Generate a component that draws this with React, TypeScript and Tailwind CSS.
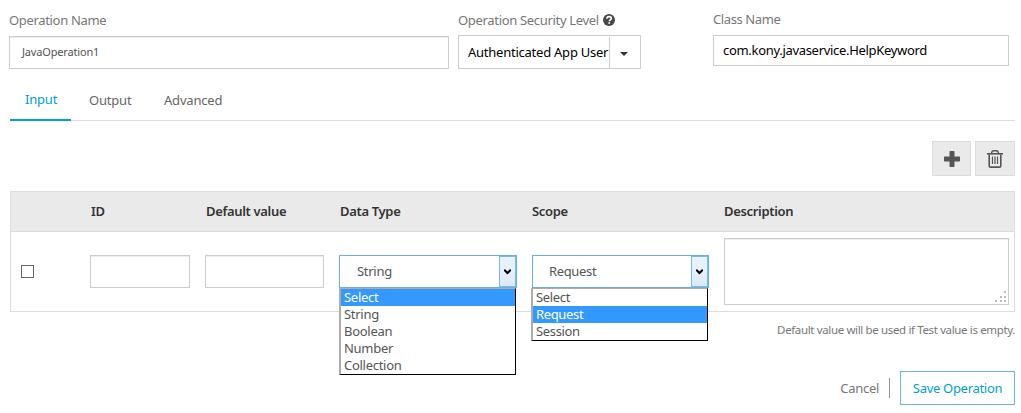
import { ReactNode } from "react";

const inputShadow = "shadow-[inset_0_1px_1px_rgba(0,0,0,0.075)]";

function DropArrow() {
  return (
    <span className="flex w-[17px] items-center justify-center border border-[#7cb8ea] bg-gradient-to-b from-[#ebf4fd] to-[#dbebfb]">
      <svg width="7" height="6" viewBox="0 0 7 6">
        <path d="M.2.8 3.5 4 6.8.8" fill="none" stroke="#000" strokeWidth="2" />
      </svg>
    </span>
  );
}

function OpenSelect({
  value,
  options,
  active,
  box,
  list,
}: {
  value: string;
  options: string[];
  active: string;
  box: string;
  list: string;
}) {
  return (
    <div className={"relative flex h-[33px] border border-[#6aaee6] bg-white " + box}>
      <span className="flex-1 leading-[31px] text-[#555]">{value}</span>
      <DropArrow />
      <ul
        className={
          "absolute top-[32px] z-10 w-[177px] border-t border-r border-b border-l-2 border-t-[#acacac] border-l-[#acacac] border-r-black border-b-black bg-white " +
          list
        }
      >
        {options.map((o) => (
          <li
            key={o}
            className={
              "h-[17px] pl-[3px] leading-[17px] " +
              (o === active ? "bg-[#3399ff] text-white" : "text-[#555]")
            }
          >
            {o}
          </li>
        ))}
      </ul>
    </div>
  );
}

function IconButton({ children, className }: { children: ReactNode; className: string }) {
  return (
    <button
      className={
        "flex h-[35px] items-center justify-center border border-[#ddd] bg-[#eaeaea] " + className
      }
    >
      {children}
    </button>
  );
}

export default function App() {
  return (
    <div className="h-[413px] w-[1021px] overflow-hidden bg-white pl-[9px] font-['Noto_Sans',sans-serif] text-[13px] whitespace-nowrap text-[#777]">
      <div className="flex h-[69px] items-start">
        <div className="w-[449px] pt-[11px]">
          <div className="h-[25px] leading-[18px] tracking-[-0.33px]">Operation Name</div>
          <div className={"h-[33px] w-[440px] border border-[#ccc] pl-3 text-[11px] leading-[30px] tracking-[-0.17px] text-[#555] " + inputShadow}>
            JavaOperation1
          </div>
        </div>
        <div className="w-[255px] pt-[11px]">
          <div className="flex h-6 leading-[18px]">
            <span className="tracking-[-0.32px]">Operation Security Level</span>
            <svg className="mt-[3px] ml-1" width="12" height="12" viewBox="0 0 12 12">
              <circle cx="6" cy="6" r="6" fill="#484848" />
              <path d="M3.9 4.8C3.9 3.3 4.8 2.6 6.1 2.6s2.2.7 2.2 1.8C8.3 5.8 6.3 5.8 6.3 7.3" fill="none" stroke="#fff" strokeWidth="1.6" />
              <path d="M5.4 8.2h1.7v1.6H5.4z" fill="#fff" />
            </svg>
          </div>
          <div className="flex h-[34px] w-[183px] border border-[#ccc] text-black">
            <span className="w-[150px] pl-[9px] leading-[33px] tracking-[-0.24px]">Authenticated App User</span>
            <span className="mt-px flex flex-1 items-center justify-center border-l border-[#ccc]">
              <svg className="mt-[2px] mr-[2px]" width="8" height="4" viewBox="0 0 8 4">
                <path d="M0 0h8L4 4z" fill="#333" />
              </svg>
            </span>
          </div>
        </div>
        <div className="pt-[10px]">
          <div className="h-[25px] leading-[18px] tracking-[-0.4px]">Class Name</div>
          <div className="h-[31px] w-[296px] border border-[#ccc] pl-[9px] leading-[29px] tracking-[-0.31px] text-black">
            com.kony.javaservice.HelpKeyword
          </div>
        </div>
      </div>

      <div className="pt-[20px] pl-px">
        <nav className="flex h-[32px] w-[1005px] border-b border-[#ddd] tracking-[-0.2px] text-[#666]">
          <span className="h-[32px] w-[61px] border-b-2 border-[#00a0d2] pl-[15px] leading-[20px] text-[#00a0d2]">Input</span>
          <span className="w-[75px] pl-[18px] leading-[22px]">Output</span>
          <span className="pl-[18px] leading-[22px]">Advanced</span>
        </nav>

        <div className="flex w-[1005px] justify-end gap-1 pt-5">
          <IconButton className="w-[39px]">
            <svg width="16" height="16" viewBox="0 0 16 16">
              <path d="M5.5 .8Q5.5 0 6.3 0h3.4q.8 0 .8.8V5.5h4.7q.8 0 .8.8v3.4q0 .8-.8.8H10.5v4.7q0 .8-.8.8H6.3q-.8 0-.8-.8V10.5H.8Q0 10.5 0 9.7V6.3Q0 5.5 .8 5.5H5.5z" fill="#555" />
            </svg>
          </IconButton>
          <IconButton className="w-[40px]">
            <svg width="16" height="18" viewBox="0 0 16 18" fill="none" stroke="#555">
              <path d="M4.5 3.2C4.8 1.5 5.6.8 6.6.8h2.8c1 0 1.8.7 2.1 2.4" strokeWidth="1.4" />
              <path d="M0 3.8h16" strokeWidth="1.6" />
              <path d="M2.2 4.5v11.2c0 .9.5 1.4 1.3 1.4h9c.8 0 1.3-.5 1.3-1.4V4.5" strokeWidth="1.6" />
              <path d="M5.5 6.5V14M8 6.5V14M10.5 6.5V14" strokeWidth="1.2" />
            </svg>
          </IconButton>
        </div>

        <div className="mt-[15px] h-[121px] w-[1005px] border border-[#ddd]">
          <div className="flex h-[40px] border-b border-[#ddd] bg-[#eaeaea] pl-[80px] leading-[39px] font-semibold tracking-[-0.33px] text-[#333]">
            <span className="w-[115px]">ID</span>
            <span className="w-[134px]">Default value</span>
            <span className="w-[192px]">Data Type</span>
            <span className="w-[192px]">Scope</span>
            <span>Description</span>
          </div>
          <div className="flex items-start">
            <div className="w-[79px] pt-[33px] pl-[10px]">
              <div className="h-[13px] w-[13px] border border-[#666]" />
            </div>
            <div className="w-[115px] pt-[23px]">
              <div className={"h-[33px] w-[100px] border border-[#ccc] " + inputShadow} />
            </div>
            <div className="w-[134px] pt-[23px]">
              <div className={"h-[33px] w-[119px] border border-[#ccc] " + inputShadow} />
            </div>
            <div className="w-[193px] pt-[23px]">
              <OpenSelect
                value="String"
                options={["Select", "String", "Boolean", "Number", "Collection"]}
                active="Select"
                box="w-[178px] pl-[17px] tracking-[-0.28px]"
                list="-left-px"
              />
            </div>
            <div className="w-[192px] pt-[23px]">
              <OpenSelect
                value="Request"
                options={["Select", "Request", "Session"]}
                active="Request"
                box="w-[177px] pl-4 tracking-[-0.35px]"
                list="-left-[2px]"
              />
            </div>
            <div className="pt-[6px]">
              <div className={"flex h-[67px] w-[285px] items-end justify-end border border-[#ccc] p-px " + inputShadow}>
                <svg width="12" height="12" viewBox="0 0 12 12" fill="#bbb">
                  <path d="M9 0h2v2H9zM5 5h2v2H5zM9 5h2v2H9zM0 9h2v2H0zM5 9h2v2H5zM9 9h2v2H9z" />
                </svg>
              </div>
            </div>
          </div>
        </div>

        <div className="w-[1005px] pt-[9px] text-right text-[11.5px] leading-[18px] tracking-[-0.36px]">
          Default value will be used if Test value is empty.
        </div>

        <div className="mt-8 flex h-[34px] w-[1005px] items-center justify-end tracking-[-0.3px]">
          <span className="pt-px">Cancel</span>
          <span className="ml-[10px] h-5 w-px bg-[#999]" />
          <button className="ml-[10px] h-[34px] w-[115px] border border-[#6cb5ea] pt-px text-[#00a0d2]">
            Save Operation
          </button>
        </div>
      </div>
    </div>
  );
}
